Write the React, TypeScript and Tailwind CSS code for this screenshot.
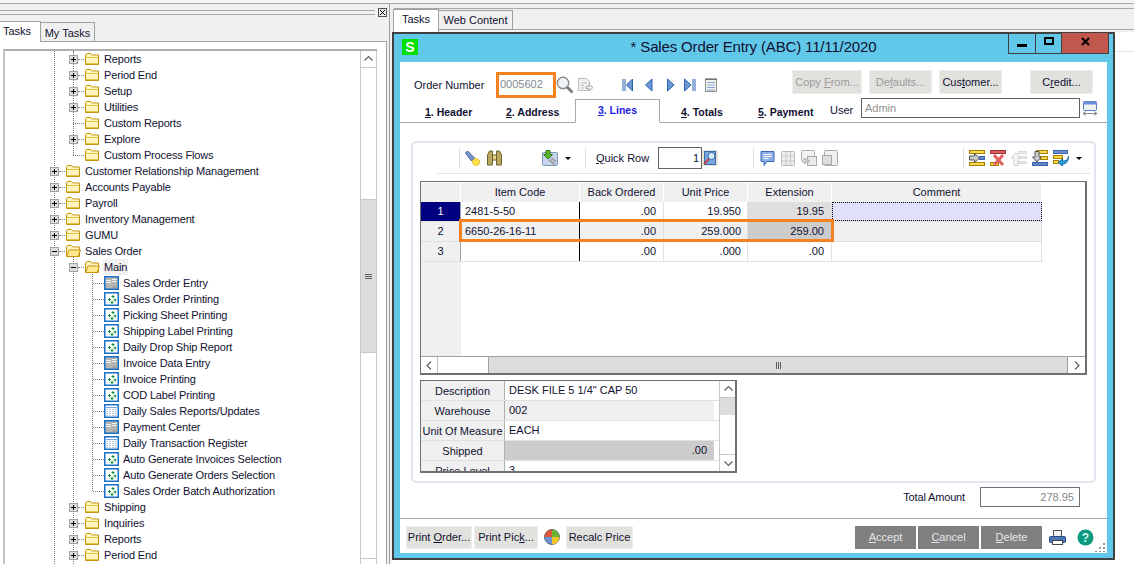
import type { ReactNode } from 'react'

const FONT = "font-['Liberation_Sans',sans-serif]"

function Folder({ open }: { open?: boolean }) {
  return (
    <svg width="16" height="14" viewBox="0 0 16 14" className="shrink-0">
      <path d="M1.5 12.500V2.500l1-1h4l1.500 1.500h6.500v9.500z" fill="#fff4c0" stroke="#c4960c" />
      {open ? (
        <path d="M1.500 12.500L4 6h11.500l-2.500 6.500z" fill="#ffe88e" stroke="#c4960c" />
      ) : (
        <path d="M2 5.500h12M2 11.500h12" stroke="#eac544" fill="none" />
      )}
    </svg>
  )
}

function Expander({ open }: { open?: boolean }) {
  return (
    <span className="w-[9px] h-[9px] border border-[#a0a0a0] bg-[#dcdcdc] flex items-center justify-center relative shrink-0">
      <span className="w-[5px] h-px bg-black" />
      {!open && <span className="absolute w-px h-[5px] bg-black" />}
    </span>
  )
}

function TaskIcon() {
  return (
    <svg width="15" height="14" viewBox="0 0 15 14" className="shrink-0">
      <rect x=".75" y=".75" width="13.500" height="12.500" fill="#fff" stroke="#1a70c8" strokeWidth="1.500" />
      <path d="M9 3v3M7.500 4.500h3M5.500 6v3M4 7.500h3M11 6.500v3M9.500 8h3M8 9v3M6.500 10.500h3" stroke="#0a8a2a" fill="none" />
    </svg>
  )
}

function FormIcon() {
  return (
    <svg width="15" height="14" viewBox="0 0 15 14" className="shrink-0">
      <rect x=".75" y=".75" width="13.500" height="12.500" fill="#b4b4b4" stroke="#1a70c8" strokeWidth="1.500" />
      <path d="M2 4.500h5M8 3.500h5M2 6.500h5M8 5.500h5" stroke="#f4f4f4" fill="none" />
      <path d="M9 11h2M12 11h1" stroke="#777" fill="none" />
    </svg>
  )
}

function ReportIcon() {
  return (
    <svg width="15" height="14" viewBox="0 0 15 14" className="shrink-0">
      <rect x=".75" y=".75" width="13.500" height="12.500" fill="#fff" stroke="#1a70c8" strokeWidth="1.500" />
      <path d="M2 3.500h11" stroke="#7aa5dc" fill="none" />
      <path d="M2 5.500h11M2 7.500h11M2 9.500h11M2 11.500h11" stroke="#b9c6d8" strokeDasharray="2 1" fill="none" />
    </svg>
  )
}

type TreeItem = { label: string; level: 1 | 2 | 3; kind: 'plus' | 'leaf' | 'open' | 'main' | 'task' | 'form' | 'report' }

const treeItems: TreeItem[] = [
  { label: 'Reports', level: 2, kind: 'plus' },
  { label: 'Period End', level: 2, kind: 'plus' },
  { label: 'Setup', level: 2, kind: 'plus' },
  { label: 'Utilities', level: 2, kind: 'plus' },
  { label: 'Custom Reports', level: 2, kind: 'leaf' },
  { label: 'Explore', level: 2, kind: 'plus' },
  { label: 'Custom Process Flows', level: 2, kind: 'leaf' },
  { label: 'Customer Relationship Management', level: 1, kind: 'plus' },
  { label: 'Accounts Payable', level: 1, kind: 'plus' },
  { label: 'Payroll', level: 1, kind: 'plus' },
  { label: 'Inventory Management', level: 1, kind: 'plus' },
  { label: 'GUMU', level: 1, kind: 'plus' },
  { label: 'Sales Order', level: 1, kind: 'open' },
  { label: 'Main', level: 2, kind: 'main' },
  { label: 'Sales Order Entry', level: 3, kind: 'form' },
  { label: 'Sales Order Printing', level: 3, kind: 'task' },
  { label: 'Picking Sheet Printing', level: 3, kind: 'task' },
  { label: 'Shipping Label Printing', level: 3, kind: 'task' },
  { label: 'Daily Drop Ship Report', level: 3, kind: 'task' },
  { label: 'Invoice Data Entry', level: 3, kind: 'form' },
  { label: 'Invoice Printing', level: 3, kind: 'task' },
  { label: 'COD Label Printing', level: 3, kind: 'task' },
  { label: 'Daily Sales Reports/Updates', level: 3, kind: 'report' },
  { label: 'Payment Center', level: 3, kind: 'form' },
  { label: 'Daily Transaction Register', level: 3, kind: 'report' },
  { label: 'Auto Generate Invoices Selection', level: 3, kind: 'task' },
  { label: 'Auto Generate Orders Selection', level: 3, kind: 'task' },
  { label: 'Sales Order Batch Authorization', level: 3, kind: 'task' },
  { label: 'Shipping', level: 2, kind: 'plus' },
  { label: 'Inquiries', level: 2, kind: 'plus' },
  { label: 'Reports', level: 2, kind: 'plus' },
  { label: 'Period End', level: 2, kind: 'plus' },
]

function TreeRow({ item }: { item: TreeItem }) {
  const pad = item.level === 1 ? 'pl-[45px]' : item.level === 2 ? 'pl-[64px]' : 'pl-[84px]'
  const isFolder = item.kind === 'plus' || item.kind === 'leaf' || item.kind === 'open' || item.kind === 'main'
  return (
    <div className={`h-4 flex items-center shrink-0 ${pad}`}>
      <span className="w-[15px] flex items-center relative shrink-0">
        {item.kind === 'plus' || item.kind === 'open' || item.kind === 'main' ? (
          <>
            <Expander open={item.kind !== 'plus'} />
            <span className="w-[6px] border-t border-dotted border-[#808080]" />
          </>
        ) : (
          <span className="ml-1 w-[11px] border-t border-dotted border-[#808080]" />
        )}
      </span>
      {isFolder && <Folder open={item.kind === 'open' || item.kind === 'main'} />}
      {item.kind === 'task' && <TaskIcon />}
      {item.kind === 'form' && <FormIcon />}
      {item.kind === 'report' && <ReportIcon />}
      <span className={`text-[11px] leading-4 tracking-[-0.15px] text-[#101030] whitespace-nowrap ${item.kind === 'main' ? 'bg-[#f0f0f0] px-px ml-[3px]' : 'ml-[4px]'}`}>
        {item.label}
      </span>
    </div>
  )
}

function Chevron({ dir }: { dir: 'up' | 'down' | 'left' | 'right' }) {
  const d = {
    up: 'M1.500 6.500L5.500 2.500L9.500 6.500',
    down: 'M1.500 3.500L5.500 7.500L9.500 3.500',
    left: 'M7 1.500L3 5.500L7 9.500',
    right: 'M4 1.500L8 5.500L4 9.500',
  }[dir]
  return (
    <svg width="11" height="11" viewBox="0 0 11 11">
      <path d={d} fill="none" stroke="#606060" strokeWidth="1.200" />
    </svg>
  )
}

function TreePanel() {
  return (
    <div className="w-[390px] h-full flex flex-col border-r border-[#a0a0a0] shrink-0">
      <div className="h-[17px] flex items-center shrink-0 pr-[2px]">
        <div className="flex-1 h-[5px] border-y border-[#a8a8a8]" />
        <div className="ml-[3px] w-[9px] h-[9px] border border-[#505050] bg-[#f0f0f0] flex items-center justify-center shrink-0">
          <svg width="7" height="7" viewBox="0 0 7 7"><path d="M1 1l5 5M6 1L1 6" stroke="#000" fill="none" /></svg>
        </div>
      </div>
      <div className="h-[21px] flex items-end relative shrink-0 z-10 -mb-px">
        <div className="w-[41px] h-[21px] bg-white border-r border-t border-[#a0a0a0] pl-[3px] text-[11px] leading-[18px] text-[#101030]">Tasks</div>
        <div className="w-[54px] h-[20px] bg-[#f0f0f0] border border-l-0 border-[#a0a0a0] text-center text-[11px] leading-[20px] text-[#101030]">My Tasks</div>
      </div>
      <div className="flex-1 min-h-0 mr-[2px] border-t border-r border-[#a0a0a0] bg-white pl-[3px] pr-[9px] pt-[7px]">
        <div className="relative h-full border-2 border-b-0 border-r-0 border-[#c4c4c4] border-t-[#b0b0b0] flex overflow-hidden">
          <div className="absolute left-[49px] top-0 bottom-0 border-l border-dotted border-[#707070]" />
          <div className="absolute left-[68px] top-0 h-[104px] border-l border-dotted border-[#707070]" />
          <div className="absolute left-[68px] top-[200px] bottom-0 border-l border-dotted border-[#707070]" />
          <div className="absolute left-[87px] top-[216px] h-[224px] border-l border-dotted border-[#707070]" />
          <div className="flex-1 min-w-0 flex flex-col relative">
            {treeItems.map((item, i) => (
              <TreeRow key={i} item={item} />
            ))}
          </div>
          <div className="w-[17px] shrink-0 border-x border-[#c8c8c8] flex flex-col bg-white">
            <div className="h-[17px] border-b border-[#c8c8c8] flex items-center justify-center shrink-0"><Chevron dir="up" /></div>
            <div className="h-[131px] shrink-0" />
            <div className="h-[154px] bg-[#dcdcdc] border-y border-[#c8c8c8] flex flex-col items-center justify-center gap-px shrink-0">
              <span className="w-[7px] h-px bg-[#606060]" />
              <span className="w-[7px] h-px bg-[#606060]" />
              <span className="w-[7px] h-px bg-[#606060]" />
            </div>
            <div className="flex-1" />
            <div className="h-[6px] border-t border-[#c8c8c8] shrink-0" />
          </div>
        </div>
      </div>
    </div>
  )
}

function NavIcons() {
  const c = '#2a62b0'
  return (
    <div className="flex items-center ml-[28px]">
      <svg width="96" height="14" viewBox="0 0 96 14">
        <path d="M1 1v12M3 1v12" stroke={c} fill="none" />
        <path d="M10.500 1v12L4.500 7z" fill="#6d97d4" stroke={c} />
        <path d="M30 1v12L23.500 7z" fill="#6d97d4" stroke={c} />
        <path d="M45.500 1v12L52 7z" fill="#6d97d4" stroke={c} />
        <path d="M62.500 1v12L69 7z" fill="#6d97d4" stroke={c} />
        <path d="M71 1v12M73 1v12" stroke={c} fill="none" />
        <rect x="83.500" y="1.500" width="11" height="12" fill="#f4f4ee" stroke="#909090" />
        <path d="M85 4.500h8M85 7h8M85 9.500h8M85 12h8" stroke="#7fa8d8" fill="none" />
        <path d="M84 0v2M86 0v2M88 0v2M90 0v2M92 0v2M94 0v2" stroke="#555" fill="none" />
      </svg>
    </div>
  )
}

function SearchIcon() {
  return (
    <svg width="18" height="18" viewBox="0 0 18 18" className="shrink-0">
      <circle cx="7" cy="7" r="5.700" fill="#eef2f4" stroke="#8a8a8a" strokeWidth="1.400" />
      <path d="M11 11l5.500 5.500" stroke="#777" strokeWidth="2.600" />
    </svg>
  )
}

function LinkDocIcon() {
  return (
    <svg width="17" height="17" viewBox="0 0 17 17" className="shrink-0">
      <path d="M1.500 1.500h8l3 3v9h-11z" fill="#f2f2f2" stroke="#bcbcbc" />
      <path d="M4 6h6M4 8.500h3M4 11h3" stroke="#bcbcbc" fill="none" />
      <path d="M9 9.500h3V7l4 3.500-4 3.500v-2.500H9z" fill="#eee" stroke="#aaa" />
    </svg>
  )
}

function WinButton({ label, disabled, className }: { label: ReactNode; disabled?: boolean; className?: string }) {
  return (
    <div className={`h-6 bg-[#e1e1dd] border border-[#eeeeee] flex items-center justify-center text-[11px] whitespace-nowrap shrink-0 ${disabled ? 'text-[#9c9c9c]' : 'text-[#101030]'} ${className ?? ''}`}>
      {label}
    </div>
  )
}

function FormTab({ k, label, className }: { k: string; label: string; className: string }) {
  return (
    <span className={`text-[10.500px] leading-4 font-bold text-[#101030] whitespace-nowrap shrink-0 ${className}`}>
      <span className="underline">{k}</span>. {label}
    </span>
  )
}

function Sep({ className }: { className: string }) {
  return <span className={`w-px h-5 bg-[#d5dfe8] shrink-0 ${className}`} />
}

function Toolbar() {
  return (
    <div className="h-[31px] flex items-center ml-[24px] mr-[4px] border-b border-[#dfe6ee] shrink-0">
      <Sep className="ml-[22px]" />
      <svg width="17" height="17" viewBox="0 0 17 17" className="ml-[4px] shrink-0">
        <path d="M1.500 3l2-2 7 7-3 3z" fill="#7a98cc" stroke="#3e5f9a" />
        <circle cx="12" cy="12" r="3.600" fill="#ffe24a" stroke="#d8a500" strokeDasharray="1.500 1" />
      </svg>
      <svg width="15" height="16" viewBox="0 0 15 16" className="ml-[6px] shrink-0">
        <path d="M.5 15V5l2-4h3v14zM14.500 15V5l-2-4h-3v14z" fill="#b8a860" stroke="#6e6030" />
        <path d="M5.500 5h4v5h-4z" fill="#e8d890" stroke="#6e6030" />
      </svg>
      <svg width="16" height="16" viewBox="0 0 16 16" className="ml-[40px] shrink-0">
        <rect x=".5" y="2.500" width="15" height="13" rx="1" fill="#c6d4ea" stroke="#7f97bd" />
        <path d="M4 .5v4H1.500L6 9l4.500-4.500H8v-4z" fill="#5ab82e" stroke="#2f7d18" />
        <path d="M7 10l6 4.500M9 8l5 3.500" stroke="#a0a0a0" strokeWidth="2" />
      </svg>
      <span className="ml-[7px] w-0 h-0 border-x-[3px] border-x-transparent border-t-[3px] border-t-black shrink-0" />
      <Sep className="ml-[14px]" />
      <span className="ml-[10px] w-[52px] text-[11px] text-[#101030] whitespace-nowrap shrink-0"><span className="underline">Q</span>uick Row</span>
      <div className="ml-[10px] w-[44px] h-[22px] border border-[#606060] bg-white text-right pr-[2px] text-[11px] leading-[20px] text-[#101030] shrink-0">1</div>
      <svg width="16" height="16" viewBox="0 0 16 16" className="shrink-0">
        <rect width="16" height="16" fill="#e8e4d8" />
        <rect x="2.500" y="1.500" width="11" height="13" fill="#7aa6dc" stroke="#3a6aa8" />
        <circle cx="9.500" cy="6" r="3.500" fill="#d8ecff" stroke="#3a6aa8" />
        <path d="M7 9l-5 5" stroke="#c04040" strokeWidth="1.800" />
      </svg>
      <Sep className="ml-[35px]" />
      <svg width="15" height="17" viewBox="0 0 15 17" className="ml-[6px] shrink-0">
        <path d="M1 1.500h13v10H7l-3 4v-4H1z" fill="#8cb0e4" stroke="#3a68b0" />
        <path d="M3.500 4.500h8M3.500 6.500h8M3.500 8.500h5" stroke="#fff" fill="none" />
      </svg>
      <svg width="14" height="15" viewBox="0 0 14 15" className="ml-[6px] shrink-0">
        <rect x=".5" y=".5" width="13" height="14" rx="1" fill="#efefef" stroke="#b4b4b4" />
        <path d="M.5 5h13M.5 10h13M5 .5v14M9.500 .5v14" stroke="#c8c8c8" fill="none" />
      </svg>
      <svg width="16" height="16" viewBox="0 0 16 16" className="ml-[6px] shrink-0">
        <rect x=".5" y=".5" width="13" height="10" rx="1" fill="#f2f2f2" stroke="#aaa" />
        <rect x="6.500" y="6.500" width="9" height="9" fill="#eaeaea" stroke="#aaa" />
        <path d="M1 11l3-3v2h4v2H4v2z" fill="#ddd" stroke="#aaa" />
      </svg>
      <svg width="16" height="16" viewBox="0 0 16 16" className="ml-[5px] shrink-0">
        <rect x="2.500" y=".5" width="13" height="15" rx="1" fill="#efefef" stroke="#aaa" />
        <rect x=".5" y="5.500" width="9" height="9" fill="#ddd" stroke="#aaa" />
      </svg>
      <div className="flex-1" />
      <Sep className="" />
      <svg width="100" height="16" viewBox="0 0 100 16" className="ml-[5px] shrink-0">
        <g>
          <rect x=".5" y=".5" width="15" height="3" fill="#f7d94a" stroke="#a88000" />
          <rect x=".5" y="12.500" width="15" height="3" fill="#f7d94a" stroke="#a88000" />
          <rect x="10.500" y="6.500" width="5" height="3" fill="#5e86c8" stroke="#3a68b0" />
          <path d="M.5 6h5V3.500L10.500 8l-5 4.500V10h-5z" fill="#ccc" stroke="#555" />
        </g>
        <g transform="translate(21 0)">
          <rect x=".5" y=".5" width="15" height="3" fill="#d86060" stroke="#a03030" />
          <rect x=".5" y="12.500" width="8" height="3" fill="#f7d94a" stroke="#a88000" />
          <path d="M4 5l9 10M13 5l-9 10" stroke="#e06060" strokeWidth="3" />
        </g>
        <g transform="translate(42 0)" opacity=".55">
          <rect x="7.500" y="1.500" width="8" height="2" fill="#ddd" stroke="#bbb" />
          <rect x="7.500" y="6.500" width="8" height="2" fill="#ddd" stroke="#bbb" />
          <rect x="7.500" y="11.500" width="8" height="2" fill="#ddd" stroke="#bbb" />
          <path d="M3 15.500V8H.5L5 2.500 9.500 8H7v7.500z" fill="#f0f0f0" stroke="#aaa" />
        </g>
        <g transform="translate(63 0)">
          <rect x="4.500" y=".5" width="11" height="3" fill="#f7d94a" stroke="#a88000" />
          <rect x="8.500" y="6.500" width="7" height="3" fill="#f7d94a" stroke="#a88000" />
          <rect x=".5" y="12.500" width="15" height="3" fill="#5e86c8" stroke="#3a68b0" />
          <path d="M3 1.500V7H.5L5 12l4.500-5H7V1.500z" fill="#ccc" stroke="#555" />
        </g>
        <g transform="translate(84 0)">
          <rect x=".5" y=".5" width="14" height="3" fill="#6f90cc" stroke="#3a68b0" />
          <rect x=".5" y="5.500" width="9" height="3" fill="#f7d94a" stroke="#a88000" />
          <rect x=".5" y="10.500" width="5" height="3" fill="#f7d94a" stroke="#a88000" />
          <path d="M15.500 6c0 4-3 5-6 5V9L5 12.500 9.500 16v-2c4 0 6-3 6-8z" fill="#2c9fdc" stroke="#1070a8" />
        </g>
      </svg>
      <span className="ml-[7px] mr-[8px] w-0 h-0 border-x-[3px] border-x-transparent border-t-[3px] border-t-black shrink-0" />
    </div>
  )
}

const cell = 'h-full flex items-center text-[11px] text-[#101030] border-r whitespace-nowrap shrink-0'

function HeaderCell({ label, className }: { label: string; className: string }) {
  return (
    <div className={`h-full bg-[#f0f0f0] border-r border-white flex items-center justify-center text-[11px] text-[#101030] shrink-0 ${className}`}>
      {label}
    </div>
  )
}

type Line = { n: number; code: string; back: string; price: string; ext: string }

const lines: Line[] = [
  { n: 1, code: '2481-5-50', back: '.00', price: '19.950', ext: '19.95' },
  { n: 2, code: '6650-26-16-11', back: '.00', price: '259.000', ext: '259.00' },
  { n: 3, code: '', back: '.00', price: '.000', ext: '.00' },
]

function LinesGrid() {
  return (
    <div className="relative ml-[7px] mt-[7px] w-[667px] h-[194px] border border-[#707070] border-r-2 border-b-2 flex flex-col shrink-0 bg-white">
      <div className="flex flex-1 min-h-0">
        <div className="flex-1 min-w-0 flex flex-col">
          <div className="h-[20px] flex shrink-0 border-t border-white">
            <HeaderCell label="" className="w-[40px]" />
            <HeaderCell label="Item Code" className="w-[119px]" />
            <HeaderCell label="Back Ordered" className="w-[84px]" />
            <HeaderCell label="Unit Price" className="w-[84px]" />
            <HeaderCell label="Extension" className="w-[84px]" />
            <HeaderCell label="Comment" className="w-[210px]" />
          </div>
          {lines.map((l) => (
            <div key={l.n} className={`h-[20px] flex shrink-0 border-b border-[#e0e0e0] w-[621px] ${l.n === 2 ? 'bg-[#f0f0f0]' : 'bg-white'}`}>
              <div className={`w-[40px] h-full flex items-center justify-center text-[11px] shrink-0 border-r border-[#a0a0a0] ${l.n === 1 ? 'bg-[#000080] text-white' : 'bg-[#f0f0f0] text-[#101030]'}`}>{l.n}</div>
              <div className={`${cell} w-[119px] pl-[4px] border-[#000000]`}>{l.code}</div>
              <div className={`${cell} w-[84px] justify-end pr-[7px] border-[#e0e0e0]`}>{l.back}</div>
              <div className={`${cell} w-[84px] justify-end pr-[6px] border-[#e0e0e0]`}>{l.price}</div>
              <div className={`${cell} w-[84px] justify-end pr-[7px] border-[#e0e0e0] ${l.n === 1 ? 'bg-[#dedede]' : l.n === 2 ? 'bg-[#cccccc]' : 'bg-white'}`}>{l.ext}</div>
              <div className={`w-[210px] h-full shrink-0 border-r border-[#e0e0e0] ${l.n === 1 ? 'bg-[#e0e0fa] border border-dotted border-black' : ''}`} />
            </div>
          ))}
          <div className="flex-1 min-h-0">
            <div className="w-[40px] h-full bg-[#f0f0f0]" />
          </div>
        </div>
      </div>
      <div className="h-[17px] flex border-t border-[#a0a0a0] shrink-0">
        <div className="w-[17px] border-r border-[#c0c0c0] flex items-center justify-center shrink-0"><Chevron dir="left" /></div>
        <div className="w-[50px] shrink-0" />
        <div className="flex-1 bg-[#dcdcdc] border-x border-[#a0a0a0] flex items-center justify-center gap-px">
          <span className="w-px h-[7px] bg-[#606060]" />
          <span className="w-px h-[7px] bg-[#606060]" />
          <span className="w-px h-[7px] bg-[#606060]" />
        </div>
        <div className="w-[17px] flex items-center justify-center shrink-0"><Chevron dir="right" /></div>
      </div>
      <div className="absolute left-[38px] top-[37px] w-[375px] h-[23px] border-[3px] border-[#f58220]" />
    </div>
  )
}

const details = [
  { label: 'Description', value: 'DESK FILE 5 1/4" CAP 50', bg: 'bg-white' },
  { label: 'Warehouse', value: '002', bg: 'bg-[#f0f0f0]' },
  { label: 'Unit Of Measure', value: 'EACH', bg: 'bg-white' },
  { label: 'Shipped', value: '.00', bg: 'bg-[#cccccc] justify-end pr-[7px]' },
  { label: 'Price Level', value: '3', bg: 'bg-white' },
]

function DetailGrid() {
  return (
    <div className="ml-[7px] mt-[5px] w-[317px] h-[93px] border-2 border-[#707070] border-t border-l flex overflow-hidden shrink-0 bg-white">
      <div className="w-[298px] shrink-0 flex flex-col">
        {details.map((d) => (
          <div key={d.label} className="h-[20px] flex shrink-0 border-b border-[#e0e0e0]">
            <div className="w-[84px] pt-[2px] bg-[#f0f0f0] border-r border-[#b0b0b0] flex items-center justify-center text-[11px] text-[#101030] whitespace-nowrap shrink-0">{d.label}</div>
            <div className={`w-[209px] flex items-center pl-[4px] text-[11px] text-[#101030] whitespace-nowrap shrink-0 ${d.bg}`}>{d.value}</div>
          </div>
        ))}
      </div>
      <div className="w-[17px] border-l border-[#c8c8c8] flex flex-col shrink-0">
        <div className="h-[17px] border-b border-[#c8c8c8] flex items-center justify-center"><Chevron dir="up" /></div>
        <div className="h-[17px] bg-[#dcdcdc]" />
        <div className="flex-1" />
        <div className="h-[17px] border-t border-[#c8c8c8] flex items-center justify-center"><Chevron dir="down" /></div>
      </div>
    </div>
  )
}

function SalesOrderWindow() {
  return (
    <div className="w-[723px] h-[528px] border-2 border-[#404040] bg-[#62c8ea] flex flex-col shrink-0 relative">
      <div className="h-[28px] flex items-center relative shrink-0 pl-[8px]">
        <div className="w-4 h-4 -mt-[2px] bg-[#00e000] text-white font-bold text-[14px] leading-4 text-center">S</div>
        <div className="absolute left-0 right-0 text-center text-[15px] tracking-[-0.15px] text-[#101030] -translate-y-[1px]">* Sales Order Entry (ABC) 11/11/2020</div>
        <div className="absolute right-[4px] -top-[1px] h-[21px] flex border border-[#404040] border-t-0">
          <div className="w-[27px] border-r border-[#404040] flex items-center justify-center"><span className="w-[10px] h-[3px] bg-black mt-1" /></div>
          <div className="w-[26px] border-r border-[#404040] flex items-center justify-center"><span className="w-[10px] h-[8px] border-2 border-black -mt-1" /></div>
          <div className="w-[46px] bg-[#c0584e] flex items-center justify-center">
            <svg width="9" height="9" viewBox="0 0 9 9" className="-mt-[3px]"><path d="M1 1l7 7M8 1L1 8" stroke="#000" strokeWidth="2" fill="none" /></svg>
          </div>
        </div>
      </div>
      <div className="mx-[6px] h-[491px] bg-white flex flex-col shrink-0">
        <div className="h-[61px] shrink-0 border-b border-[#a8a8a8]">
          <div className="h-[36px] flex items-start pl-[14px] pt-[10px]">
            <div className="h-[26px] flex items-center">
              <span className="text-[11px] text-[#101030] whitespace-nowrap w-[82px] shrink-0">Order Number</span>
              <div className="w-[60px] h-[26px] border-[3px] border-[#f58220] text-[11px] leading-[19px] pl-[1px] text-[#808890] shrink-0">0005602</div>
              <SearchIcon />
              <span className="w-[3px]" />
              <LinkDocIcon />
              <NavIcons />
            </div>
            <div className="flex-1" />
            <div className="flex items-center gap-[7px] pr-[14px] -mt-[2px]">
              <WinButton label={<span>Copy <span className="underline">F</span>rom...</span>} disabled className="w-[70px]" />
              <WinButton label={<span>De<span className="underline">f</span>aults...</span>} disabled className="w-[63px]" />
              <WinButton label={<span>Cus<span className="underline">t</span>omer...</span>} className="w-[63px]" />
              <WinButton label={<span>C<span className="underline">r</span>edit...</span>} className="w-[63px] ml-[21px]" />
            </div>
          </div>
          <div className="h-[24px] flex items-end pb-[2px] pl-[25px]">
            <FormTab k="1" label="Header" className="w-[81px]" />
            <FormTab k="2" label="Address" className="w-[69px]" />
            <div className="w-[85px] h-[24px] -mb-[3px] pt-[2px] bg-white border border-b-white border-[#a8a8a8] text-center text-[10.500px] leading-4 font-bold text-[#1a1ae0] relative z-10 shrink-0">
              <span className="underline">3</span>. Lines
            </div>
            <FormTab k="4" label="Totals" className="ml-[21px] w-[77px]" />
            <FormTab k="5" label="Payment" className="w-[72px]" />
            <span className="w-[31px] text-[11px] text-[#101030] mb-[2px] leading-4 shrink-0">User</span>
            <div className="w-[219px] h-[20px] mb-[2px] border border-[#606060] text-[11px] leading-[18px] pl-[3px] text-[#909090] shrink-0">Admin</div>
            <svg width="16" height="16" viewBox="0 0 16 16" className="ml-[2px] mb-[3px] shrink-0">
              <rect x="1.500" y=".5" width="13" height="9" rx="1" fill="#f0f0f0" stroke="#5a80c0" />
              <rect x="1.500" y=".5" width="13" height="3" fill="#6a90d8" />
              <path d="M1 12.500h14M1 12.500l3-2M1 12.500l3 2M15 12.500l-3-2M15 12.500l-3 2" stroke="#888" fill="none" />
            </svg>
          </div>
        </div>
        <div className="ml-[11px] mt-[18px] h-[342px] w-[685px] border-2 border-[#dfe6ee] rounded-[5px] flex flex-col shrink-0">
          <Toolbar />
          <LinesGrid />
          <DetailGrid />
        </div>
        <div className="h-[36px] flex items-start pt-[4px] justify-end pr-[27px] border-b border-[#a8a8a8] shrink-0">
          <span className="text-[11px] leading-[20px] tracking-[-0.15px] text-[#101030] mr-[15px]">Total Amount</span>
          <div className="w-[100px] h-[20px] border border-[#707070] text-right pr-[5px] text-[11px] leading-[18px] text-[#808890]">278.95</div>
        </div>
        <div className="flex-1 flex items-center pl-[6px] pt-[2px] relative">
          <WinButton label={<span>Print <span className="underline">O</span>rder...</span>} className="w-[66px] h-[23px]" />
          <WinButton label={<span>Print Pic<span className="underline">k</span>...</span>} className="w-[64px] ml-[2px] h-[23px]" />
          <svg width="16" height="16" viewBox="0 0 16 16" className="ml-[6px] shrink-0">
            <circle cx="8" cy="8" r="7.500" fill="#6f93cf" stroke="#55688a" />
            <path d="M8 .5A7.500 7.500 0 0 1 15.500 8H8z" fill="#6cb030" />
            <path d="M8 8h7.500A7.500 7.500 0 0 1 8 15.500z" fill="#f1c428" />
            <path d="M8 8H.5A7.500 7.500 0 0 1 8 .5z" fill="#d9583a" />
          </svg>
          <WinButton label="Recalc Price" className="w-[67px] ml-[6px] h-[23px]" />
          <div className="flex-1" />
          <div className="flex gap-[2px] mr-[7px] h-[23px]">
            <div className="w-[61px] bg-[#808080] flex items-center justify-center text-[11px] text-[#e6e6e6]"><span><span className="underline">A</span>ccept</span></div>
            <div className="w-[61px] bg-[#808080] flex items-center justify-center text-[11px] text-[#e6e6e6]"><span><span className="underline">C</span>ancel</span></div>
            <div className="w-[61px] bg-[#808080] flex items-center justify-center text-[11px] text-[#e6e6e6]"><span><span className="underline">D</span>elete</span></div>
          </div>
          <svg width="17" height="17" viewBox="0 0 17 17" className="shrink-0">
            <rect x="4.500" y="1.500" width="8" height="6" fill="#f4f4f4" stroke="#555" />
            <rect x=".5" y="7.500" width="16" height="6" rx="1" fill="#4d78b8" stroke="#2a4a80" />
            <rect x="3.500" y="11.500" width="10" height="4" fill="#fff" stroke="#444" />
          </svg>
          <svg width="17" height="17" viewBox="0 0 17 17" className="ml-[11px] shrink-0 mr-[13px]">
            <circle cx="8.500" cy="8.500" r="8" fill="#0d9a80" />
            <text x="8.500" y="13" textAnchor="middle" fontSize="12" fontWeight="700" fill="#d8fff0" fontFamily="Liberation Sans, sans-serif">?</text>
          </svg>
          <svg width="10" height="10" viewBox="0 0 10 10" className="absolute right-[2px] bottom-[1px]">
            <path d="M8 1h2v2H8zM4 5h2v2H4zM8 5h2v2H8zM0 9h2v1H0zM4 9h2v1H4zM8 9h2v1H8z" fill="#999" />
          </svg>
        </div>
      </div>
    </div>
  )
}

export default function App() {
  return (
    <div className={`w-[1134px] h-[564px] overflow-hidden bg-[#f0f0f0] flex flex-col ${FONT}`}>
      <div className="h-[4px] border-b border-[#a8a8a8] bg-[#f4f4f4] shrink-0" />
      <div className="flex-1 min-h-0 flex">
        <TreePanel />
        <div className="flex-1 min-w-0 h-full flex flex-col pl-[2px] relative">
          <div className="h-[28px] flex items-end shrink-0 relative">
            <div className="absolute left-[2px] right-0 top-[4px] bottom-[2px] border-y border-[#a8a8a8]" />
            <div className="ml-px w-[46px] h-[23px] bg-white border border-b-0 border-[#a0a0a0] text-center text-[11px] leading-[18px] text-[#101030] relative z-10 shrink-0">Tasks</div>
            <div className="w-[74px] h-[20px] mb-[2px] bg-[#f0f0f0] border border-l-0 border-[#a0a0a0] text-center text-[11px] leading-[18px] text-[#101030] relative shrink-0">Web Content</div>
          </div>
          <div className="flex-1 min-h-0 flex bg-white">
            <SalesOrderWindow />
            <div className="flex-1 min-w-0 h-[20px] border-b border-[#e4e4e4]" />
          </div>
        </div>
      </div>
    </div>
  )
}
